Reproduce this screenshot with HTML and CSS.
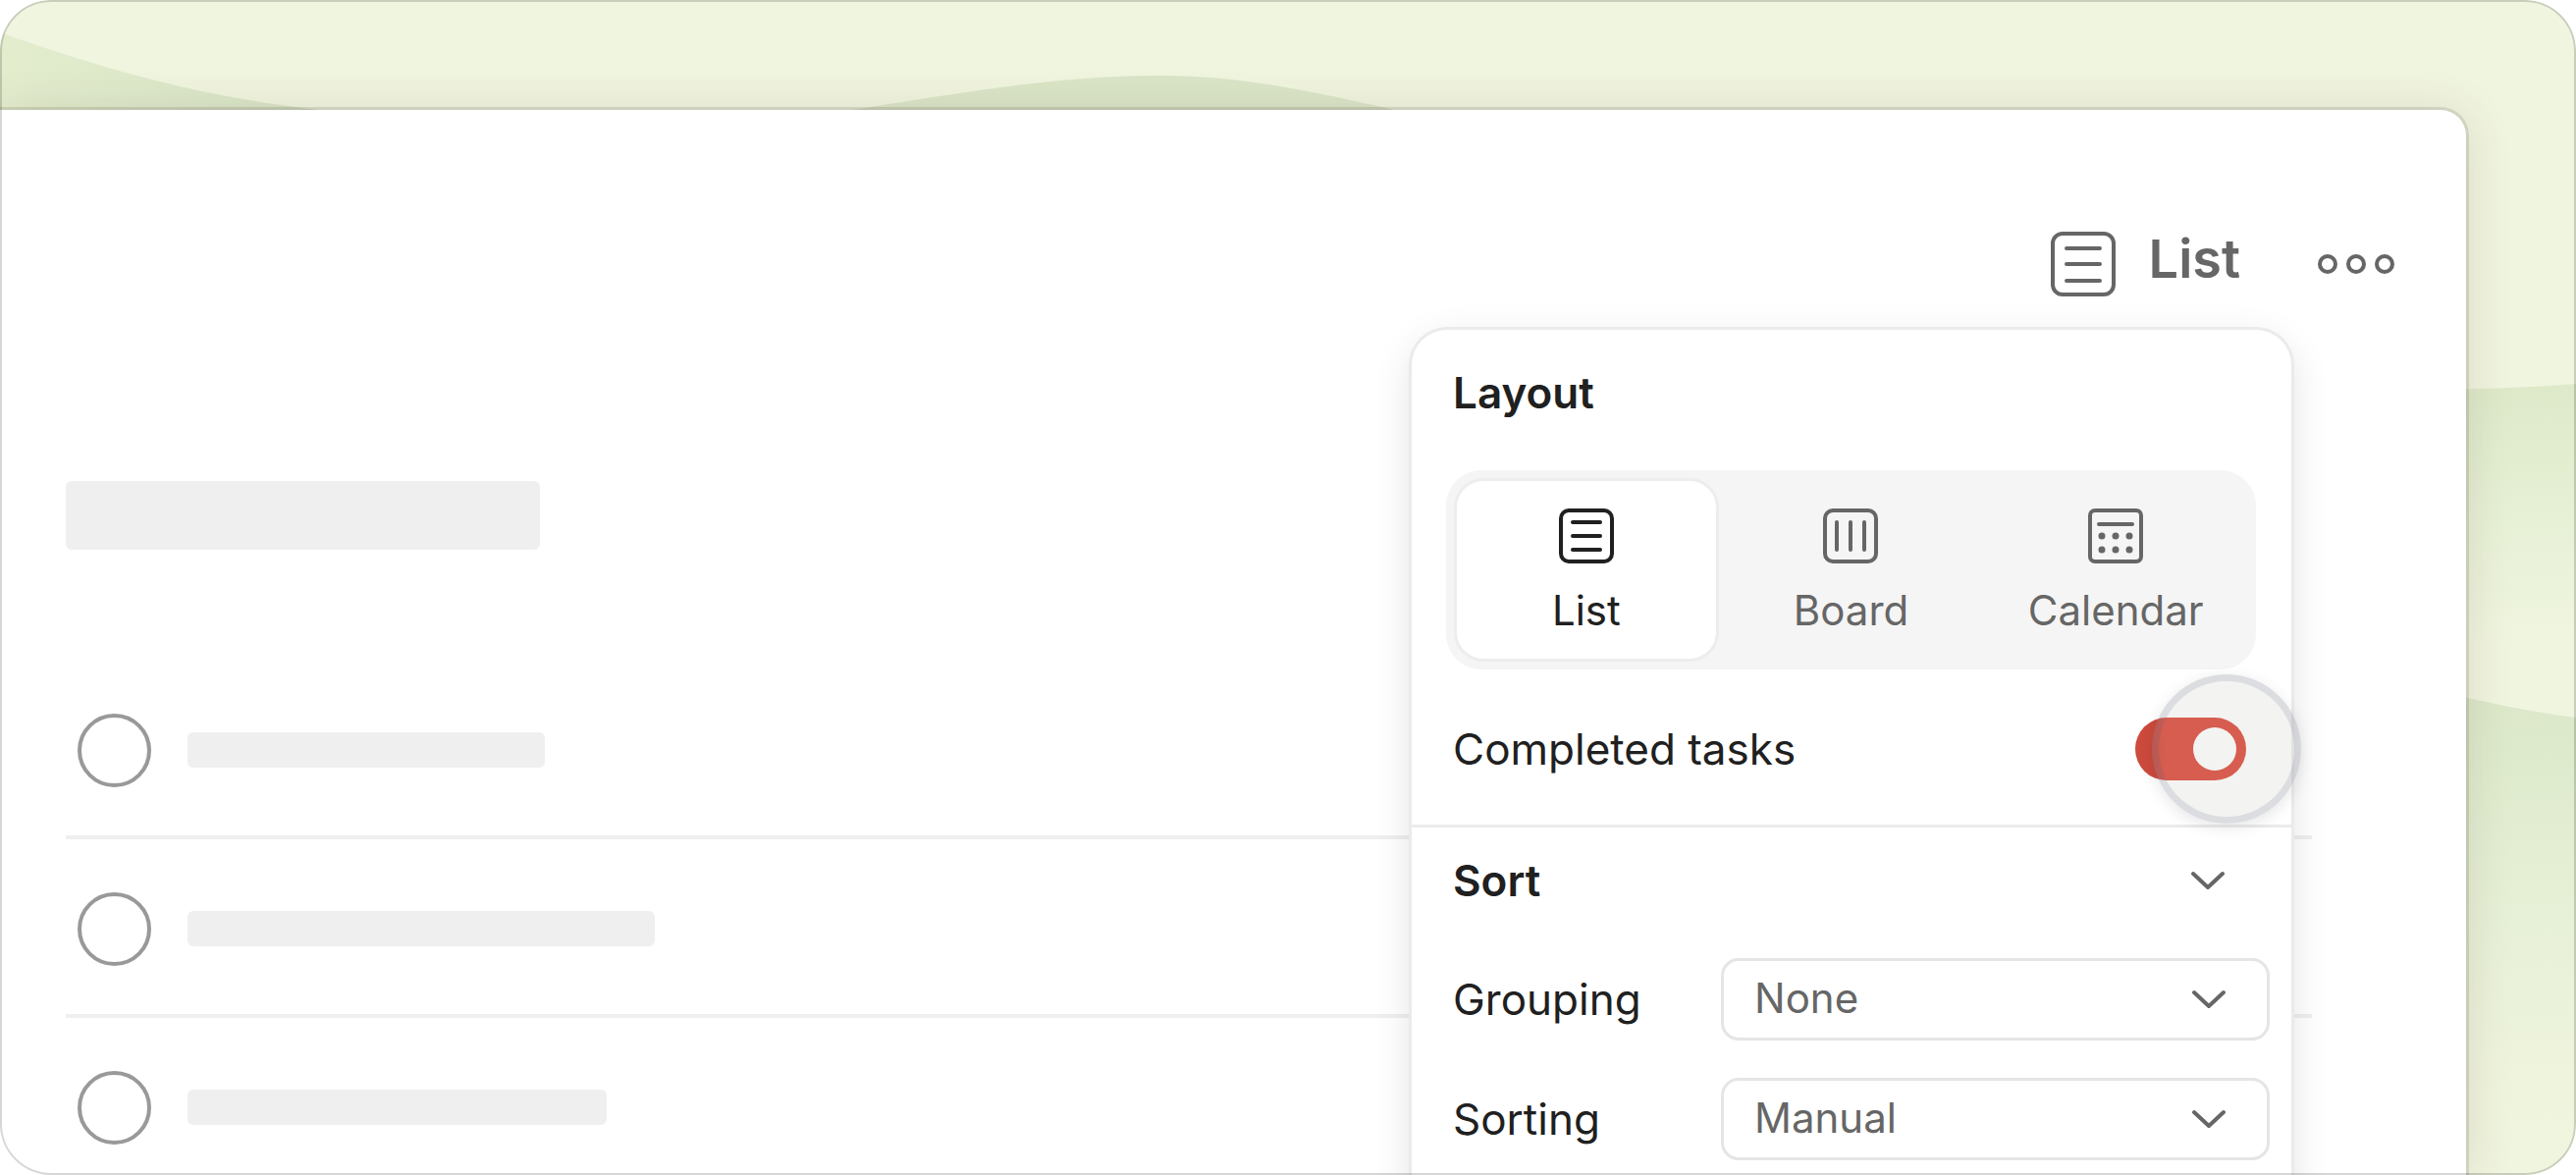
FILE: index.html
```html
<!DOCTYPE html>
<html lang="en">
<head>
    <meta charset="UTF-8">
    <meta name="viewport" content="width=device-width, initial-scale=1.0">
    <title>View options</title>
    <link rel="stylesheet" href="styles.css">
</head>
<body>
    <div class="stage">
        <!-- hills behind the window -->
        <svg class="hills" viewBox="0 0 2624 1197" preserveAspectRatio="none" aria-hidden="true">
            <defs>
                <linearGradient id="hill-left" x1="0" y1="0" x2="1" y2="0">
                    <stop offset="0" stop-color="#e3edce"/>
                    <stop offset="1" stop-color="#d6e3c5"/>
                </linearGradient>
                <linearGradient id="hill-right" x1="0" y1="0" x2="0" y2="1">
                    <stop offset="0" stop-color="#dde9c9"/>
                    <stop offset="0.4" stop-color="#e7f1d6"/>
                    <stop offset="0.75" stop-color="#f0f5df"/>
                    <stop offset="1" stop-color="#f0f5df"/>
                </linearGradient>
                <linearGradient id="hill-low" x1="0" y1="0" x2="0" y2="1">
                    <stop offset="0" stop-color="#dae7c7"/>
                    <stop offset="0.5" stop-color="#e7f1d7"/>
                    <stop offset="0.8" stop-color="#eff4dd"/>
                    <stop offset="1" stop-color="#f0f5df"/>
                </linearGradient>
            </defs>
            <path fill="url(#hill-left)" d="M0 33 C110 72 210 100 335 113 V200 H0 Z"/>
            <path fill="#dae5c7" d="M860 113 C960 98 1070 77 1180 77 C1270 77 1350 96 1425 113 V200 H860 Z"/>
            <path fill="url(#hill-right)" d="M2400 398 C2480 398 2560 396 2624 391 V740 H2400 Z"/>
            <path fill="url(#hill-low)" d="M2400 686 C2480 702 2550 722 2624 731 V1197 H2400 Z"/>
        </svg>

        <main class="window">
            <header class="toolbar">
                <button class="tool-btn" type="button">
                    <svg class="icon-lg" viewBox="0 0 66 66" aria-hidden="true">
                        <rect x="2" y="2" width="62" height="62" rx="10"/>
                        <path d="M16 17H50M16 33H50M16 50H50"/>
                    </svg>
                    <span>List</span>
                </button>
                <button class="tool-btn" type="button" aria-label="More">
                    <svg class="icon-more" viewBox="0 0 80 66" aria-hidden="true">
                        <circle cx="11" cy="33" r="8"/>
                        <circle cx="40" cy="33" r="8"/>
                        <circle cx="69" cy="33" r="8"/>
                    </svg>
                </button>
            </header>

            <div class="content">
                <div class="bar bar-title"></div>
                <ul class="tasks">
                    <li class="task"><input type="checkbox" aria-label="Task 1"><span class="bar bar-short"></span></li>
                    <li class="task"><input type="checkbox" aria-label="Task 2"><span class="bar bar-long"></span></li>
                    <li class="task"><input type="checkbox" aria-label="Task 3"><span class="bar bar-medium"></span></li>
                </ul>
            </div>

            <!-- view menu -->
            <section class="menu">
                <div class="menu-top">
                    <h2>Layout</h2>
                    <div class="layouts">
                        <label class="layout">
                            <input type="radio" name="layout" checked>
                            <svg class="icon" viewBox="0 0 56 56" aria-hidden="true">
                                <rect x="2" y="2" width="52" height="52" rx="8"/>
                                <path d="M14 14H42M14 28H42M14 42H42"/>
                            </svg>
                            <span>List</span>
                        </label>
                        <label class="layout">
                            <input type="radio" name="layout">
                            <svg class="icon" viewBox="0 0 56 56" aria-hidden="true">
                                <rect x="2" y="2" width="52" height="52" rx="8"/>
                                <path d="M14 14V42M28 14V42M42 14V42"/>
                            </svg>
                            <span>Board</span>
                        </label>
                        <label class="layout">
                            <input type="radio" name="layout">
                            <svg class="icon" viewBox="0 0 56 56" aria-hidden="true">
                                <rect x="2" y="2" width="52" height="52" rx="5"/>
                                <path d="M11 16H45"/>
                                <g class="dots">
                                    <circle cx="14" cy="28" r="3.5"/>
                                    <circle cx="28" cy="28" r="3.5"/>
                                    <circle cx="42" cy="28" r="3.5"/>
                                    <circle cx="14" cy="42" r="3.5"/>
                                    <circle cx="28" cy="42" r="3.5"/>
                                    <circle cx="42" cy="42" r="3.5"/>
                                </g>
                            </svg>
                            <span>Calendar</span>
                        </label>
                    </div>
                    <div class="toggle-row">
                        <label for="completed">Completed tasks</label>
                        <span class="switch">
                            <input type="checkbox" id="completed" checked>
                            <span class="pointer"></span>
                        </span>
                    </div>
                </div>

                <div class="menu-sort">
                    <button class="sort-head" type="button">
                        <span>Sort</span>
                        <svg class="chevron" viewBox="0 0 34 20" aria-hidden="true"><path d="M2 3L17 17L32 3"/></svg>
                    </button>
                    <div class="field">
                        <label for="grouping">Grouping</label>
                        <span class="select">
                            <select id="grouping"><option>None</option></select>
                            <svg class="chevron" viewBox="0 0 34 20" aria-hidden="true"><path d="M2 3L17 17L32 3"/></svg>
                        </span>
                    </div>
                    <div class="field">
                        <label for="sorting">Sorting</label>
                        <span class="select">
                            <select id="sorting"><option>Manual</option></select>
                            <svg class="chevron" viewBox="0 0 34 20" aria-hidden="true"><path d="M2 3L17 17L32 3"/></svg>
                        </span>
                    </div>
                </div>
            </section>
        </main>
    </div>
</body>
</html>
```
FILE: styles.css
```css
* {
    box-sizing: border-box;
}

body {
    margin: 0;
    background: #ffffff;
    color: #202020;
    font-family: Inter, "Liberation Sans", sans-serif;
    font-size: 44px;
    line-height: 56px;
}

button,
select {
    font: inherit;
    color: inherit;
    background: none;
    border: none;
    padding: 0;
    margin: 0;
}

input {
    appearance: none;
    margin: 0;
}

svg {
    display: block;
    flex: none;
    fill: none;
    stroke: currentColor;
    stroke-width: 4px;
    stroke-linecap: round;
    stroke-linejoin: round;
}

.stage {
    position: relative;
    display: flex;
    height: 100vh;
    padding: 112px 112px 0 0;
    border-radius: 52px;
    background: #f0f5df;
    overflow: hidden;
}

.stage::after {
    content: "";
    position: absolute;
    inset: 0;
    border: 2px solid rgba(0, 0, 0, 0.16);
    border-radius: 52px;
    pointer-events: none;
}

.hills {
    position: absolute;
    inset: 0;
    width: 100%;
    height: 100%;
    stroke: none;
}

/* window */
.window {
    position: relative;
    flex: 1;
    background: #ffffff;
    border-radius: 0 26px 0 0;
    box-shadow: 0 0 0 3px rgba(0, 0, 0, 0.1), 0 4px 48px rgba(100, 60, 50, 0.16);
}

.toolbar {
    display: flex;
    justify-content: flex-end;
    align-items: center;
    gap: 78px;
    padding: 124px 72px 0 0;
    color: #666666;
}

.tool-btn {
    display: flex;
    align-items: center;
    gap: 34px;
    height: 66px;
    font-size: 54px;
    font-weight: 600;
}

.tool-btn span {
    padding-bottom: 10px;
}

.icon-lg {
    width: 66px;
    height: 66px;
}

.icon-more {
    width: 80px;
    height: 66px;
}

.content {
    padding: 188px 157px 0 67px;
}

.bar {
    display: block;
    height: 36px;
    border-radius: 6px;
    background: #efefef;
}

.bar-title {
    width: 483px;
    height: 70px;
}

.bar-short {
    width: 364px;
}

.bar-long {
    width: 476px;
}

.bar-medium {
    width: 427px;
}

.tasks {
    list-style: none;
    margin: 113px 0 0;
    padding: 0;
}

.task {
    display: flex;
    align-items: center;
    gap: 37px;
    height: 182px;
    padding: 4px 0 0 12px;
    border-bottom: 4px solid #efefef;
}

.task:last-child {
    border-color: transparent;
}

.task input {
    width: 75px;
    height: 75px;
    border: 4px solid #999999;
    border-radius: 50%;
}

/* view menu */
.menu {
    position: absolute;
    top: 224px;
    right: 178px;
    width: 896px;
    background: #ffffff;
    border-radius: 36px 36px 0 0;
    box-shadow: 0 0 0 3px #ebebeb, 0 12px 40px rgba(0, 0, 0, 0.12);
}

.menu-top {
    padding: 36px 36px 0 35px;
    border-bottom: 3px solid #ebebeb;
}

.menu h2 {
    margin: 0 0 51px;
    padding-left: 7px;
    font-size: 44px;
    font-weight: 600;
}

.layouts {
    display: grid;
    grid-template-columns: repeat(3, 1fr);
    padding: 8px;
    border-radius: 36px;
    background: #f5f5f5;
}

.layout {
    display: flex;
    flex-direction: column;
    align-items: center;
    gap: 20px;
    height: 187px;
    padding-top: 28px;
    border: 3px solid transparent;
    border-radius: 30px;
    color: #666666;
    font-size: 42px;
}

.layout input {
    position: absolute;
}

.layout:has(:checked) {
    color: #202020;
    background: #ffffff;
    border-color: #ededed;
}

.icon {
    width: 56px;
    height: 56px;
}

.dots {
    fill: currentColor;
    stroke: none;
}

.toggle-row {
    display: flex;
    justify-content: space-between;
    align-items: center;
    height: 158px;
    padding: 4px 10px 0 7px;
}

.switch {
    position: relative;
    display: flex;
}

.switch input {
    width: 113px;
    height: 64px;
    padding: 10px;
    border-radius: 32px;
    background: linear-gradient(90deg, #cd4a3d 20px, #dd4c40 30px);
}

.switch input::before {
    content: "";
    display: block;
    width: 44px;
    height: 44px;
    margin-left: auto;
    border-radius: 50%;
    background: #ffffff;
}

.pointer {
    position: absolute;
    top: -44px;
    right: -56px;
    width: 152px;
    height: 152px;
    border: 7px solid rgba(130, 132, 142, 0.28);
    border-radius: 50%;
    background: rgba(180, 186, 168, 0.16);
    background-clip: padding-box;
    box-shadow: 0 4px 16px rgba(0, 0, 0, 0.1);
}

.menu-sort {
    padding: 22px 22px 40px 42px;
}

.sort-head {
    display: flex;
    justify-content: space-between;
    align-items: center;
    width: 100%;
    height: 64px;
    padding-right: 46px;
    font-weight: 600;
}

.chevron {
    width: 34px;
    height: 20px;
    color: #666666;
}

.field {
    display: flex;
    justify-content: space-between;
    align-items: center;
    height: 84px;
    margin-top: 38px;
}

.field:first-of-type {
    margin-top: 47px;
}

.select {
    display: flex;
    align-items: center;
    position: relative;
    width: 559px;
}

.select select {
    appearance: none;
    width: 100%;
    height: 84px;
    padding: 0 80px 2px 31px;
    border: 3px solid #e5e5e5;
    border-radius: 18px;
    color: #666666;
    font-size: 42px;
}

.select .chevron {
    position: absolute;
    right: 45px;
    pointer-events: none;
}
```
